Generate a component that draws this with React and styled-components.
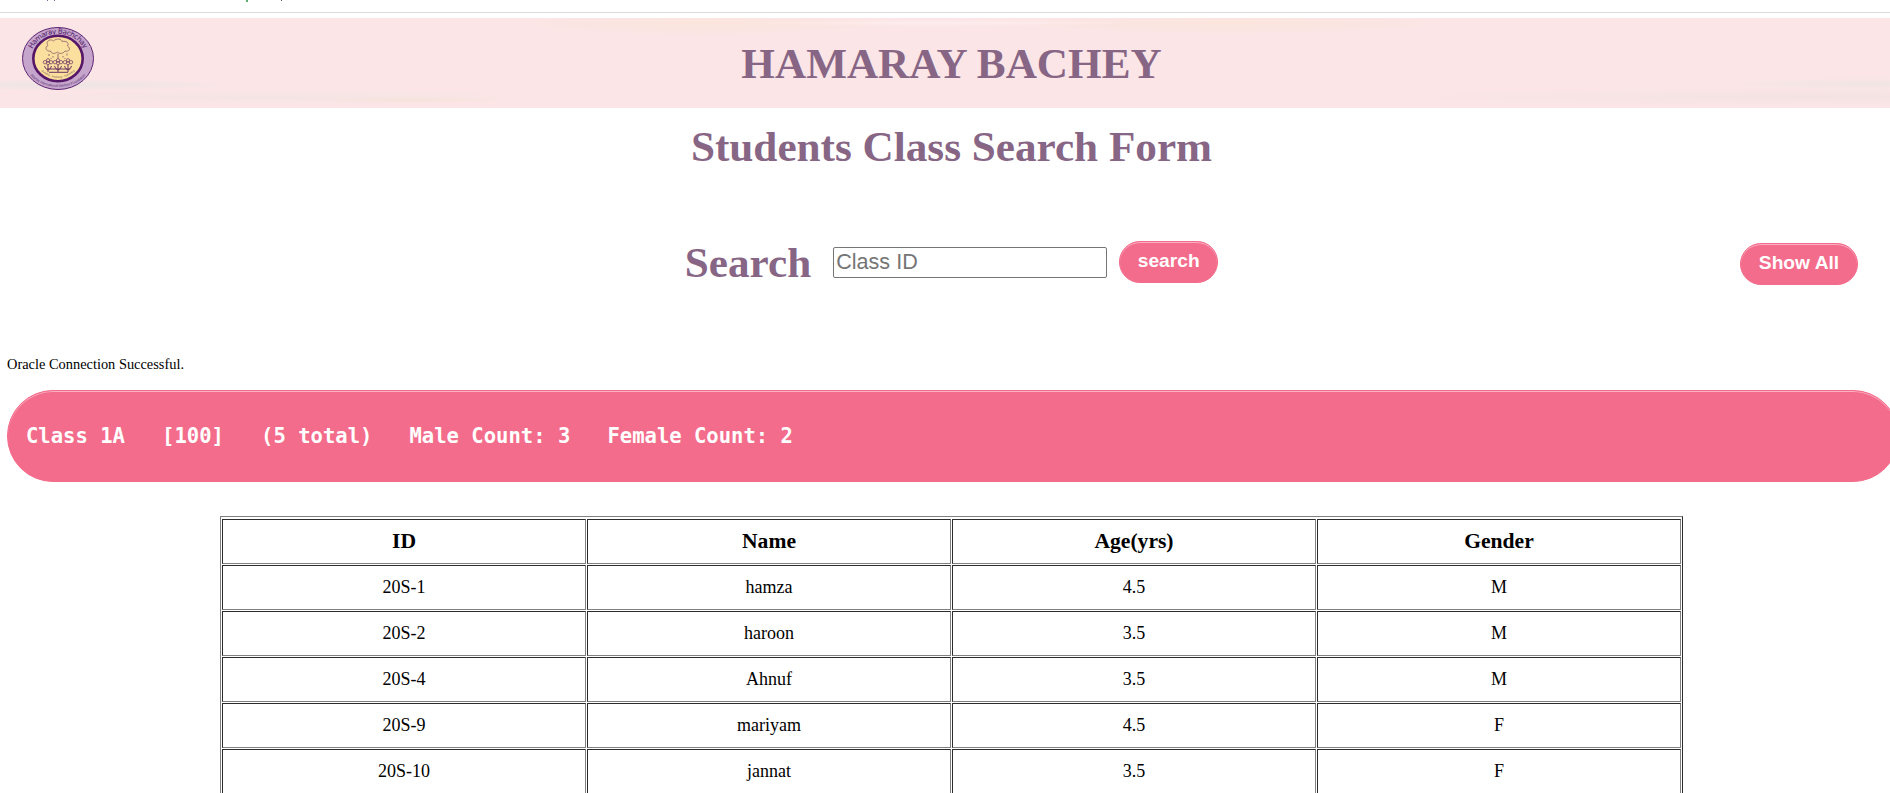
import React from "react";
import styled, { createGlobalStyle } from "styled-components";

const GlobalStyle = createGlobalStyle`
  * { box-sizing: border-box; }
  html, body { margin: 0; padding: 0; background: #fff; overflow: hidden; }
  #root { height: 793px; overflow: hidden; }
`;

const Page = styled.div`
  width: 1903px;
  height: 793px;
  overflow: hidden;
  display: flex;
  flex-direction: column;
  font-family: "Liberation Serif", "Times New Roman", serif;
  color: #000;
`;

const BrowserEdge = styled.div`
  height: 13px;
  margin-bottom: 5px;
  flex: none;
  border-bottom: 1px solid #dadada;
`;

const Banner = styled.header`
  height: 90px;
  flex: none;
  display: grid;
  grid-template-columns: 1fr auto 1fr;
  background:
    radial-gradient(ellipse 170px 6px at 70px 67px, rgba(230, 229, 226, 0.7), transparent),
    radial-gradient(ellipse 260px 7px at 270px 79px, rgba(240, 228, 225, 0.7), transparent),
    radial-gradient(ellipse 110px 4px at 410px 82px, rgba(248, 227, 218, 0.9), transparent),
    radial-gradient(ellipse 200px 14px at 700px 5px, rgba(251, 229, 219, 0.9), transparent),
    radial-gradient(ellipse 200px 3px at 930px 5px, rgba(255, 240, 240, 0.8), transparent),
    radial-gradient(ellipse 240px 13px at 1230px 5px, rgba(251, 229, 219, 0.9), transparent),
    radial-gradient(ellipse 150px 6px at 1870px 66px, rgba(236, 229, 225, 0.75), transparent),
    radial-gradient(ellipse 420px 9px at 1810px 79px, rgba(243, 226, 226, 0.9), transparent),
    #fbe5e7;
`;

const Logo = styled.svg`
  display: block;
  width: 72px;
  height: 63px;
  margin: 9px 0 0 22px;
`;

const Title = styled.h1`
  margin: 0;
  font-size: 43.2px;
  line-height: 50px;
  font-weight: bold;
  color: #876585;
  white-space: nowrap;
`;

const BannerTitle = styled(Title)`
  padding-top: 21px;
`;

const PageTitle = styled(Title)`
  margin-top: 14px;
  text-align: center;
`;

const SearchRow = styled.div`
  margin-top: 66px;
  height: 54px;
  flex: none;
  display: grid;
  grid-template-columns: 1fr auto 1fr;
`;

const SearchForm = styled.form`
  grid-column: 2;
  display: flex;
  align-items: flex-start;
`;

const SearchLabel = styled(Title).attrs({ as: "label" })`
  margin-right: 22px;
`;

const ClassInput = styled.input`
  width: 274px;
  height: 31px;
  margin: 9px 12px 0 0;
  padding: 0 2px 2px;
  border: 1px solid #767676;
  border-radius: 2px;
  font: 21.6px "Liberation Sans", Arial, sans-serif;
  &::placeholder { color: #757575; opacity: 1; }
`;

const PillButton = styled.button`
  height: 42px;
  width: ${(p) => p.$width}px;
  margin: ${(p) => p.$margin};
  padding: 0 0 2px;
  border: 1px solid #f46c8b;
  border-radius: 21px;
  background: #f46c8b;
  box-shadow: inset 0 1px 0 #fbb0c4;
  color: #fff;
  font: bold 19.2px "Liberation Sans", Arial, sans-serif;
  white-space: nowrap;
`;

const Status = styled.p`
  margin: 63px 0 0 7px;
  font-size: 14.4px;
  line-height: 18px;
`;

const Summary = styled.div`
  width: 1892px;
  height: 92px;
  flex: none;
  margin: 17px 0 0 7px;
  padding: 0 18px;
  display: flex;
  align-items: center;
  border: 1px solid #f46c8b;
  border-radius: 46px;
  background: #f46c8b;
  box-shadow: inset 0 1px 0 #fbb0c4;
  color: #fff;
  font: bold 20.55px "DejaVu Sans Mono", monospace;
  white-space: pre;
`;

const StudentTable = styled.table`
  width: 1463px;
  margin: 34px 0 0 220px;
  table-layout: fixed;
  border: 1px solid;
  border-color: #808080 #2c2c2c #2c2c2c #808080;
  border-collapse: separate;
  border-spacing: 1px;
  padding: 1px 0 0;
  font-size: 18px;
  text-align: center;
`;

const Cell = styled.td`
  height: 45px;
  padding: 0 0 1px;
  border: 1px solid;
  border-color: #2c2c2c #808080 #808080 #2c2c2c;
`;

const HeadCell = styled(Cell).attrs({ as: "th" })`
  font-size: 21.6px;
`;

const students = [
  ["20S-1", "hamza", "4.5", "M"],
  ["20S-2", "haroon", "3.5", "M"],
  ["20S-4", "Ahnuf", "3.5", "M"],
  ["20S-9", "mariyam", "4.5", "F"],
  ["20S-10", "jannat", "3.5", "F"],
];

const Flower = ({ x }) => (
  <g transform={`translate(${x} 36)`} fill="none" stroke="#6b3562" strokeWidth="0.7">
    <circle cx="0" cy="0.3" r="1.5" />
    <circle cx="-3" cy="-0.8" r="1.7" />
    <circle cx="3" cy="-0.8" r="1.7" />
    <circle cx="0" cy="-2.8" r="1.6" />
    <path d="M0 1.5V9M0 7Q-3 6-3.5 3M0 7Q3 6 3.5 3" strokeWidth="1" />
  </g>
);

const Emblem = () => (
  <Logo viewBox="0 0 72 63">
    <defs>
      <path id="arc-top" d="M10.6 21.5A27.5 24 0 0 1 61.4 21.5" />
      <path id="arc-bottom" d="M7.8 47.5C20 64 52 64 64.2 47.5" />
      <path id="arc-inner" d="M17 42Q36 60 55 42" />
    </defs>
    <ellipse cx="36" cy="31.5" rx="35.5" ry="31" fill="#c5a5cb" stroke="#5e2472" strokeWidth="1" />
    <ellipse cx="36" cy="31.5" rx="24.7" ry="22.7" fill="#fbdf9f" stroke="#571768" strokeWidth="2.6" />
    <text fill="#4e1769" fontFamily="DejaVu Sans, sans-serif" fontSize="7.2">
      <textPath href="#arc-top" startOffset="50%" textAnchor="middle" textLength="63">Hamaray Bachchay</textPath>
    </text>
    <text fill="#64397c" fontFamily="Liberation Sans, sans-serif" fontSize="3.7">
      <textPath href="#arc-bottom" startOffset="50%" textAnchor="middle" textLength="62">Atlantis International Welfare Foundation</textPath>
    </text>
    <text fill="#775344" fontFamily="Liberation Sans, sans-serif" fontSize="2.8">
      <textPath href="#arc-inner" startOffset="50%" textAnchor="middle">Guiding - Inspiring - Nurturing</textPath>
    </text>
    <path
      d="M28.5 24c-4.500 1-6-4-2.500-5.500-3-3.500 2-7.500 5.500-4.500 3-3.200 8.500-2 8.500 0.500 4.500-1 7.500 1.500 5.500 4.500 3.500 2 2 6.500-2.500 5-2 3-5.500 3-7.500 1-3 2-6 2-7-1z"
      fill="none"
      stroke="#8d5c68"
      strokeWidth="0.8"
    />
    <path d="M27 27v2M31 29v1.5M36 26.500v5M41 29v1.5M45 26.500v2M29 31v1M43 31v1" stroke="#8d5c68" strokeWidth="0.9" />
    <Flower x={26} />
    <Flower x={36} />
    <Flower x={46} />
    <path d="M25 42h23M27 45.3h19" stroke="#6b3562" strokeWidth="1" fill="none" />
  </Logo>
);

const EdgeStrip = styled.svg`
  display: block;
  width: 300px;
  height: 2px;
`;

const EdgeMarks = () => (
  <EdgeStrip viewBox="0 0 300 2">
    <path d="M47.500 0v1M54.5 0v1" stroke="#8268a5" />
    <path d="M247 0v2" stroke="#5cae6c" strokeWidth="2" />
    <path d="M281.5 0v1" stroke="#555" />
  </EdgeStrip>
);

export default function App() {
  return (
    <>
      <GlobalStyle />
      <Page>
        <BrowserEdge>
          <EdgeMarks />
        </BrowserEdge>
        <Banner>
          <Emblem />
          <BannerTitle>HAMARAY BACHEY</BannerTitle>
        </Banner>
        <PageTitle as="h2">Students Class Search Form</PageTitle>
        <SearchRow>
          <SearchForm onSubmit={(e) => e.preventDefault()}>
            <SearchLabel htmlFor="class-id">Search</SearchLabel>
            <ClassInput id="class-id" placeholder="Class ID" />
            <PillButton $width={99} $margin="3px 0 0">search</PillButton>
          </SearchForm>
          <PillButton $width={118} $margin="5px 45px 0 auto">Show All</PillButton>
        </SearchRow>
        <Status>Oracle Connection Successful.</Status>
        <Summary>Class 1A   [100]   (5 total)   Male Count: 3   Female Count: 2</Summary>
        <StudentTable>
          <thead>
            <tr>
              {["ID", "Name", "Age(yrs)", "Gender"].map((h) => (
                <HeadCell key={h}>{h}</HeadCell>
              ))}
            </tr>
          </thead>
          <tbody>
            {students.map((row) => (
              <tr key={row[0]}>
                {row.map((value, i) => (
                  <Cell key={i}>{value}</Cell>
                ))}
              </tr>
            ))}
          </tbody>
        </StudentTable>
      </Page>
    </>
  );
}
